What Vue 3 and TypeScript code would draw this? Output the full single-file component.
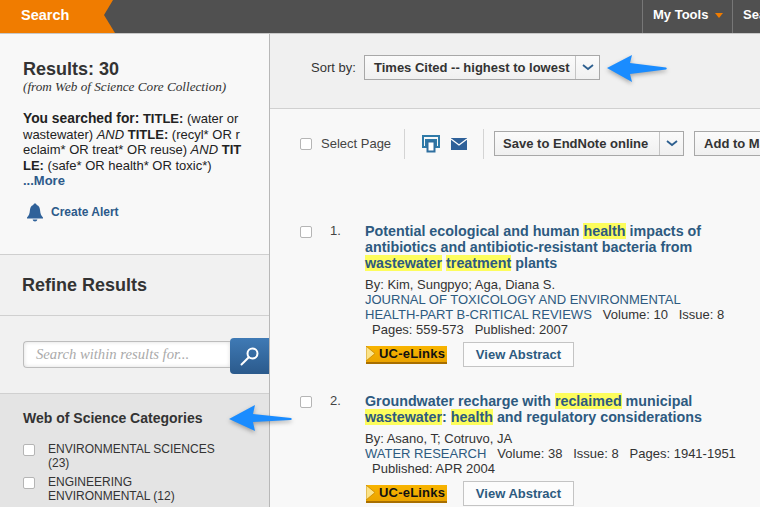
<script setup lang="ts">
// define type section
type Mark = { text: string; hit?: boolean }
type Paper = {
  num: string
  title: Mark[][]
  authors: string
  source: string[]
  line1: string
  rest: string[]
}

// define variable section
const categories: string[][] = [
  ['ENVIRONMENTAL SCIENCES', '(23)'],
  ['ENGINEERING', 'ENVIRONMENTAL (12)'],
]

const papers: Paper[] = [
  {
    num: '1.',
    title: [
      [{ text: 'Potential ecological and human ' }, { text: 'health', hit: true }, { text: ' impacts of' }],
      [{ text: 'antibiotics and antibiotic-resistant bacteria from' }],
      [{ text: 'wastewater', hit: true }, { text: ' ' }, { text: 'treatment', hit: true }, { text: ' plants' }],
    ],
    authors: 'By: Kim, Sungpyo; Aga, Diana S.',
    source: ['JOURNAL OF TOXICOLOGY AND ENVIRONMENTAL', 'HEALTH-PART B-CRITICAL REVIEWS'],
    line1: 'Volume: 10\u00a0\u00a0\u00a0Issue: 8',
    rest: ['Pages: 559-573\u00a0\u00a0\u00a0Published: 2007'],
  },
  {
    num: '2.',
    title: [
      [{ text: 'Groundwater recharge with ' }, { text: 'reclaimed', hit: true }, { text: ' municipal' }],
      [{ text: 'wastewater', hit: true }, { text: ': ' }, { text: 'health', hit: true }, { text: ' and regulatory considerations' }],
    ],
    authors: 'By: Asano, T; Cotruvo, JA',
    source: ['WATER RESEARCH'],
    line1: 'Volume: 38\u00a0\u00a0\u00a0Issue: 8\u00a0\u00a0\u00a0Pages: 1941-1951',
    rest: ['Published: APR 2004'],
  },
]
</script>

<template>
  <div class="page">
    <header class="topbar">
      <div class="tab">Search</div>
      <div class="bar_fill"></div>
      <div class="nav_item tools">My Tools <span class="caret"></span></div>
      <div class="nav_item">Search History</div>
    </header>

    <div class="columns">
      <aside class="side">
        <section class="summary">
          <h2>Results: 30</h2>
          <p class="from">(from Web of Science Core Collection)</p>
          <p class="query">
            <b class="lead">You searched for:</b> <b>TITLE:</b> (water or<br />
            wastewater) <i>AND</i> <b>TITLE:</b> (recyl* OR r<br />
            eclaim* OR treat* OR reuse) <i>AND</i> <b>TIT</b><br />
            <b>LE:</b> (safe* OR health* OR toxic*)<br />
            <a class="more">...More</a>
          </p>
          <div class="alert">
            <svg width="18" height="19" viewBox="0 0 18 19">
              <path d="M9 0.5c1 0 1.6.7 1.7 1.6 2.4.8 3.2 3 3.4 5.4.2 3 1 5.2 2.9 6.9v1H1v-1c1.900-1.700 2.700-3.900 2.900-6.900.2-2.400 1-4.600 3.400-5.400C7.400 1.200 8 0.500 9 0.500z" fill="#2f6199" />
              <path d="M6.600 16.500h4.800c-.3 1.200-1.200 2-2.400 2s-2.100-.8-2.400-2z" fill="#2f6199" />
            </svg>
            <a>Create Alert</a>
          </div>
        </section>

        <section class="refine"><h3>Refine Results</h3></section>

        <section class="within">
          <div class="within_box">Search within results for...</div>
          <div class="within_btn">
            <svg width="20" height="20" viewBox="0 0 20 20">
              <circle cx="12.500" cy="7.500" r="5" fill="none" stroke="#fff" stroke-width="2" />
              <path d="M8.800 11.200L1.500 18.500" stroke="#fff" stroke-width="2" stroke-linecap="round" />
            </svg>
          </div>
        </section>

        <section class="cats">
          <h4>Web of Science Categories</h4>
          <div v-for="cat in categories" :key="cat[0]" class="cat_row">
            <span class="check"></span>
            <span class="cat_label">{{ cat[0] }}<br />{{ cat[1] }}</span>
          </div>
        </section>
      </aside>

      <main class="main">
        <section class="sort">
          <span class="sort_label">Sort by:</span>
          <div class="select sort_select">
            <span class="select_text">Times Cited -- highest to lowest</span>
            <span class="select_arrow">
              <svg width="12" height="7" viewBox="0 0 12 7"><path d="M1 1l5 4 5-4" fill="none" stroke="#2d5f8f" stroke-width="1.800" /></svg>
            </span>
          </div>
        </section>

        <section class="toolbar">
          <span class="check"></span>
          <span class="select_page">Select Page</span>
          <span class="sep"></span>
          <svg class="print" width="18" height="18" viewBox="0 0 18 18">
            <path d="M1 1h16v11h-3V5H4v7H1z" fill="none" stroke="#2f7aa8" stroke-width="2" />
            <path d="M5.500 6.500h7v10h-7z" fill="#fff" stroke="#2f6f9f" stroke-width="2" />
          </svg>
          <svg class="mail" width="16" height="12" viewBox="0 0 16 12">
            <path d="M0 0h16v12H0z" fill="#2f6199" />
            <path d="M0 1l8 6 8-6" fill="none" stroke="#fff" stroke-width="1.300" />
          </svg>
          <span class="sep sep2"></span>
          <div class="select save_select">
            <span class="select_text">Save to EndNote online</span>
            <span class="select_arrow">
              <svg width="12" height="7" viewBox="0 0 12 7"><path d="M1 1l5 4 5-4" fill="none" stroke="#2d5f8f" stroke-width="1.800" /></svg>
            </span>
          </div>
          <div class="select add_select"><span class="select_text">Add to Marked List</span></div>
        </section>

        <section class="records">
          <article v-for="paper in papers" :key="paper.num" class="record">
            <span class="check rec_check"></span>
            <span class="rec_num">{{ paper.num }}</span>
            <div class="rec_body">
              <div class="rec_title">
                <div v-for="(line, i) in paper.title" :key="i">
                  <template v-for="(m, j) in line" :key="j"><mark v-if="m.hit">{{ m.text }}</mark><template v-else>{{ m.text }}</template></template>
                </div>
              </div>
              <div class="rec_meta">
                <div>{{ paper.authors }}</div>
                <div v-for="(s, i) in paper.source" :key="s">
                  <span class="journal">{{ s }}</span>
                  <span v-if="i === paper.source.length - 1" class="vol">{{ paper.line1 }}</span>
                </div>
                <div v-for="r in paper.rest" :key="r" class="rest">{{ r }}</div>
              </div>
              <div class="rec_actions">
                <div class="elinks">
                  <svg width="11" height="15" viewBox="0 0 11 15">
                    <path d="M0 0l9 7.500L0 15z" fill="#fbe38a" stroke="#c98a00" stroke-width=".8" />
                  </svg>
                  <span>UC-eLinks</span>
                </div>
                <div class="abstract">View Abstract</div>
              </div>
            </div>
          </article>
        </section>
      </main>
    </div>

    <!-- annotation arrows drawn over the screenshot -->
    <svg class="arrow arrow_sort" width="64" height="30" viewBox="0 0 64 30">
      <path d="M1 14L26 1l-2 8 36 4.500c1 .5 1 1.500 0 2L24 20l2 8z" fill="#1a8cff" />
    </svg>
    <svg class="arrow arrow_cat" width="66" height="30" viewBox="0 0 66 30">
      <path d="M1 15L27 1l-2 9 38 4c1 .5 1 1.500 0 2l-38 2 2 9z" fill="#1a8cff" />
    </svg>
  </div>
</template>

<style scoped>
.page {
  position: relative;
  width: 760px;
  height: 507px;
  overflow: hidden;
  background: #f8f8f8;
  color: #333;
  font-family: "Liberation Sans", Arial, sans-serif;
  font-size: 13px;
}

/* header */
.topbar {
  display: flex;
  height: 33px;
  background: #f07c00;
  border-bottom: 1px solid #c8c8c8;
}
.tab {
  flex: 0 0 104px;
  padding-left: 21px;
  box-sizing: border-box;
  color: #fff;
  font-size: 14.500px;
  font-weight: bold;
  line-height: 30px;
}
.bar_fill {
  flex: 0 0 538px;
  background: #505050;
  clip-path: polygon(9px 0, 100% 0, 100% 100%, 11px 100%, 0 15px);
}
.nav_item {
  flex: 0 0 auto;
  padding: 0 11px 0 10px;
  background: #505050;
  border-left: 1px solid #777;
  color: #fff;
  font-size: 13px;
  font-weight: bold;
  line-height: 30px;
  white-space: nowrap;
}
.tools {
  width: 90px;
  box-sizing: border-box;
  padding-right: 0;
}
.caret {
  display: inline-block;
  margin-left: 3px;
  vertical-align: 1px;
  border-left: 4.500px solid transparent;
  border-right: 4.500px solid transparent;
  border-top: 5px solid #f07c00;
}

.columns {
  display: flex;
}

/* sidebar */
.side {
  flex: 0 0 269px;
  height: 473px;
  border-right: 1px solid #b8b8b8;
  background: #f8f8f8;
}
.summary {
  height: 221px;
  box-sizing: border-box;
  padding: 25px 0 0 23px;
  border-bottom: 1px solid #cfcfcf;
}
.summary h2 {
  margin: 0;
  font-size: 18px;
  line-height: 20px;
  color: #333;
}
.from {
  margin: 0;
  font-family: "Liberation Serif", serif;
  font-style: italic;
  font-size: 13.200px;
  line-height: 15px;
  color: #333;
}
.query {
  margin: 17px 0 0;
  font-size: 13px;
  line-height: 15.500px;
  color: #222;
  white-space: nowrap;
}
.lead {
  font-size: 13.800px;
}
.more {
  font-weight: bold;
  color: #2d5a8a;
}
.alert {
  display: flex;
  align-items: center;
  gap: 7px;
  margin: 14px 0 0 3px;
}
.alert a {
  color: #2d5a8a;
  font-weight: bold;
  font-size: 12px;
}
.refine {
  height: 61px;
  box-sizing: border-box;
  padding: 20px 0 0 22px;
  background: #f1f1f1;
  border-bottom: 1px solid #d0d0d0;
}
.refine h3 {
  margin: 0;
  font-size: 18px;
  line-height: 20px;
  color: #333;
}
.within {
  display: flex;
  align-items: center;
  height: 78px;
  box-sizing: border-box;
  padding: 0 0 0 23px;
  background: #f1f1f1;
  border-bottom: 1px solid #d0d0d0;
}
.within_box {
  flex: 0 0 207px;
  height: 27px;
  box-sizing: border-box;
  padding-left: 12px;
  background: #fff;
  border: 1px solid #bdbdbd;
  border-right: 0;
  border-radius: 4px 0 0 4px;
  box-shadow: inset 0 0 4px #ddd;
  color: #aaa;
  font-family: "Liberation Serif", serif;
  font-style: italic;
  font-size: 14.700px;
  line-height: 25px;
  white-space: nowrap;
}
.within_btn {
  display: flex;
  align-items: center;
  justify-content: center;
  flex: 0 0 39px;
  height: 36px;
  margin-top: 3px;
  border-radius: 4px 0 0 4px;
  background: linear-gradient(#3f7ab5, #2b5a8c);
}
.cats {
  height: 113px;
  box-sizing: border-box;
  padding: 16px 0 0 23px;
  background: #e4e4e4;
}
.cats h4 {
  margin: 0 0 16px;
  font-size: 14px;
  line-height: 16px;
  color: #333;
}
.cat_row {
  display: flex;
  align-items: flex-start;
  margin-bottom: 5px;
}
.cat_row .check {
  margin-top: 2px;
}
.cat_label {
  margin-left: 13px;
  font-size: 12px;
  line-height: 14px;
  color: #333;
  white-space: nowrap;
}
.check {
  flex: 0 0 auto;
  display: inline-block;
  width: 12px;
  height: 12px;
  box-sizing: border-box;
  background: #fff;
  border: 1px solid #b5b5b5;
  border-radius: 2px;
}

/* main column */
.main {
  flex: 0 0 490px;
  min-width: 0;
}
.sort {
  display: flex;
  align-items: center;
  height: 75px;
  box-sizing: border-box;
  padding: 0 0 8px 41px;
  background: #f0f0f0;
  border-bottom: 1px solid #d0d0d0;
}
.sort_label {
  width: 53px;
  font-size: 13px;
  color: #333;
}
.select {
  display: flex;
  flex: 0 0 auto;
  height: 25px;
  box-sizing: border-box;
  border: 1px solid #a8a8a8;
  background: linear-gradient(#fbfbfb, #f0f0f0);
  color: #333;
  font-weight: bold;
  font-size: 13px;
  line-height: 23px;
  white-space: nowrap;
}
.select_text {
  padding-left: 9px;
}
.select_arrow {
  display: flex;
  align-items: center;
  justify-content: center;
  border-left: 1px solid #c4c4c4;
}
.sort_select {
  width: 236px;
}
.sort_select .select_text {
  width: 202px;
}
.sort_select .select_arrow {
  width: 23px;
}
.toolbar {
  display: flex;
  align-items: center;
  height: 69px;
  box-sizing: border-box;
  padding: 0 0 0 30px;
  white-space: nowrap;
}
.select_page {
  margin-left: 9px;
  font-size: 13px;
  color: #444;
}
.sep {
  flex: 0 0 1px;
  height: 30px;
  margin-left: 13px;
  background: #d4d4d4;
}
.print {
  flex: 0 0 auto;
  margin-left: 17px;
}
.mail {
  flex: 0 0 auto;
  margin-left: 11px;
}
.sep2 {
  margin-left: 16px;
}
.save_select {
  width: 190px;
  margin-left: 10px;
}
.save_select .select_text {
  width: 157px;
  padding-left: 8px;
}
.save_select .select_arrow {
  width: 23px;
}
.add_select {
  width: 130px;
  margin-left: 10px;
}

/* records */
.records {
  padding: 45px 0 0 30px;
}
.record {
  position: relative;
  display: flex;
  height: 170px;
}
.rec_check {
  margin-top: 3px;
}
.rec_num {
  flex: 0 0 35px;
  margin-left: 18px;
  font-size: 13px;
  line-height: 15px;
  color: #444;
}
.rec_body {
  flex: 1;
  white-space: nowrap;
}
.rec_title {
  font-size: 14.300px;
  font-weight: bold;
  line-height: 16px;
  color: #2d5a80;
}
mark {
  background: #fdfd5c;
  color: inherit;
}
.rec_meta {
  margin-top: 6px;
  font-size: 13px;
  line-height: 15px;
  color: #333;
}
.journal {
  color: #2d5a80;
}
.vol {
  margin-left: 11px;
}
.rest {
  padding-left: 7px;
}
.rec_actions {
  display: flex;
  align-items: center;
  margin-top: 5px;
}
.elinks {
  display: flex;
  align-items: center;
  width: 81px;
  height: 18px;
  margin-left: 1px;
  background: linear-gradient(#f8b400, #eba400);
  border-bottom: 2px solid #a86f00;
  box-sizing: border-box;
  color: #111;
  font-size: 13px;
  font-weight: bold;
  letter-spacing: .2px;
  line-height: 15px;
}
.elinks svg {
  flex: 0 0 auto;
}
.elinks span {
  margin-left: 2px;
}
.abstract {
  width: 111px;
  height: 25px;
  box-sizing: border-box;
  margin-left: 16px;
  background: #fcfcfc;
  border: 1px solid #c4c4c4;
  color: #2d5a80;
  font-size: 13px;
  font-weight: bold;
  line-height: 23px;
  text-align: center;
}

/* annotation arrows */
.arrow {
  position: absolute;
  filter: drop-shadow(0 2px 2px rgba(0, 0, 0, .3));
}
.arrow_sort {
  left: 606px;
  top: 54px;
}
.arrow_cat {
  left: 228px;
  top: 404px;
}
</style>

<style>
html,
body {
  margin: 0;
  overflow: hidden;
}
</style>
